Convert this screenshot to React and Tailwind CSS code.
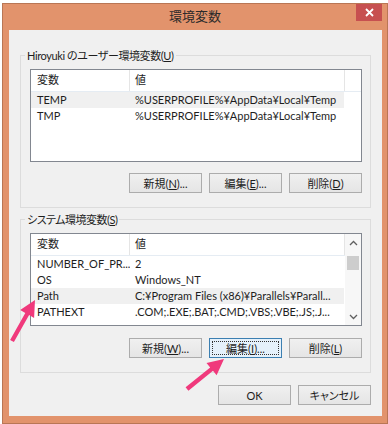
import React from "react";

const F = "font-['Lato','Noto_Sans_CJK_JP',sans-serif] [font-feature-settings:'palt'] text-[11px] text-[#1e1e1e]";

function U({ children }) {
  return <span className="underline underline-offset-[1px]">{children}</span>;
}

function Btn({ children, focused }) {
  if (focused) {
    return (
      <div className="w-[73px] h-[20px] border border-[#3c7fb1] bg-[#e5f1fb] p-[2px] flex">
        <div className="flex-1 border border-dotted border-[#333] flex items-center justify-center leading-none">
          {children}
        </div>
      </div>
    );
  }
  return (
    <div className="w-[73px] h-[20px] border border-[#acacac] bg-gradient-to-b from-[#f0f0f0] to-[#e5e5e5] flex items-center justify-center leading-none">
      {children}
    </div>
  );
}

function ListView({ rows, highlight, scroll }) {
  return (
    <div className="ml-[9px] mr-[8px] h-[93px] border border-[#828790] bg-white flex">
      <div className="flex-1 flex flex-col">
        <div className="h-[22px] flex border-b border-[#e5ecf3]">
          <div className="w-[99px] border-r border-[#e5e5e5] pl-[6px] flex items-center">変数</div>
          <div className="w-[215px] border-r border-[#e5e5e5] pl-[5px] flex items-center">値</div>
          <div className="flex-1" />
        </div>
        {rows.map((r, i) => (
          <div
            key={i}
            className={
              "h-[16px] flex items-center " +
              (i === highlight ? "bg-[#f0f0f0] w-[313px]" : "w-[313px]")
            }
          >
            <div className="w-[99px] pl-[6px] whitespace-nowrap overflow-hidden">{r[0]}</div>
            <div className="w-[214px] pl-[5px] whitespace-nowrap overflow-hidden">{r[1]}</div>
          </div>
        ))}
      </div>
      {scroll && (
        <div className="w-[16px] bg-[#f7f7f7] flex flex-col items-center">
          <div className="h-[18px] flex items-center justify-center">
            <svg width="9" height="6" viewBox="0 0 9 6">
              <path d="M1 5 L4.5 1.5 L8 5" fill="none" stroke="#606060" strokeWidth="1.3" />
            </svg>
          </div>
          <div className="mt-[4px] w-[12px] h-[14px] bg-[#cdcdcd]" />
          <div className="flex-1" />
          <div className="h-[16px] flex items-center justify-center">
            <svg width="9" height="6" viewBox="0 0 9 6">
              <path d="M1 1 L4.5 4.5 L8 1" fill="none" stroke="#606060" strokeWidth="1.3" />
            </svg>
          </div>
        </div>
      )}
    </div>
  );
}

function arrowPts(tx, ty, hx, hy) {
  const dx = hx - tx, dy = hy - ty;
  const len = Math.hypot(dx, dy);
  const ux = dx / len, uy = dy / len;
  const nx = -uy, ny = ux;
  const hl = 16, hw = 8, sw = 2.2;
  const bx = hx - ux * hl, by = hy - uy * hl;
  const p = [
    [tx + nx * sw, ty + ny * sw],
    [bx + nx * sw, by + ny * sw],
    [bx + nx * hw, by + ny * hw],
    [hx, hy],
    [bx - nx * hw, by - ny * hw],
    [bx - nx * sw, by - ny * sw],
    [tx - nx * sw, ty - ny * sw],
  ];
  return p.map((q) => q[0].toFixed(1) + "," + q[1].toFixed(1)).join(" ");
}

export default function App() {
  return (
    <div className={"relative w-[388px] h-[424px] bg-white overflow-hidden " + F}>
      <div className="ml-[2px] mt-[3px] w-[386px] h-[421px] bg-[#e2936c] border border-[#b97655] flex flex-col">
        <div className="h-[26px] flex items-start px-[5px]">
          <div className="w-[26px]" />
          <div className="flex-1 h-[26px] flex items-center justify-center text-[13px] text-[#2a2a2a] pb-[1px]">
            環境変数
          </div>
          <div className="w-[26px] h-[17px] bg-[#c75050] flex items-center justify-center">
            <svg width="9" height="9" viewBox="0 0 9 9">
              <path d="M1 1 L8 8 M8 1 L1 8" stroke="white" strokeWidth="1.8" />
            </svg>
          </div>
        </div>
        <div className="ml-[6px] mr-[5px] h-[386px] bg-[#f0f0f0] flex flex-col pt-[25px] px-[11px]">
          {/* group 1 */}
          <div className="border border-[#dcdcdc] pb-[14px]">
            <div className="-mt-[8px] h-[16px] ml-[4px] px-[2px] bg-[#f0f0f0] w-fit flex items-center whitespace-nowrap tracking-[-0.4px]">
              Hiroyuki のユーザー環境変数(<U>U</U>)
            </div>
            <div className="mt-[5px]">
              <ListView
                rows={[
                  ["TEMP", "%USERPROFILE%¥AppData¥Local¥Temp"],
                  ["TMP", "%USERPROFILE%¥AppData¥Local¥Temp"],
                ]}
                highlight={0}
              />
            </div>
            <div className="mt-[11px] mr-[8px] flex justify-end gap-[7px]">
              <Btn>新規(<U>N</U>)...</Btn>
              <Btn>編集(<U>E</U>)...</Btn>
              <Btn>削除(<U>D</U>)</Btn>
            </div>
          </div>
          {/* group 2 */}
          <div className="mt-[11px] border border-[#dcdcdc] pb-[14px]">
            <div className="-mt-[8px] h-[16px] ml-[4px] px-[2px] bg-[#f0f0f0] w-fit flex items-center whitespace-nowrap tracking-[-0.5px]">
              システム環境変数(<U>S</U>)
            </div>
            <div className="mt-[5px]">
              <ListView
                rows={[
                  ["NUMBER_OF_PR...", "2"],
                  ["OS", "Windows_NT"],
                  ["Path", "C:¥Program Files (x86)¥Parallels¥Parall..."],
                  ["PATHEXT", ".COM;.EXE;.BAT;.CMD;.VBS;.VBE;.JS;.J..."],
                ]}
                highlight={2}
                scroll
              />
            </div>
            <div className="mt-[12px] mr-[8px] flex justify-end gap-[7px]">
              <Btn>新規(<U>W</U>)...</Btn>
              <Btn focused>編集(<U>I</U>)...</Btn>
              <Btn>削除(<U>L</U>)</Btn>
            </div>
          </div>
          <div className="mt-[12px] flex justify-end gap-[7px]">
            <Btn>OK</Btn>
            <Btn>キャンセル</Btn>
          </div>
        </div>
      </div>
      <svg className="absolute left-0 top-0 pointer-events-none" width="388" height="424">
        <g fill="#f0397c">
          <polygon points={arrowPts(12, 341, 35, 300)} />
          <polygon points={arrowPts(187, 389, 224, 359)} />
        </g>
      </svg>
    </div>
  );
}
